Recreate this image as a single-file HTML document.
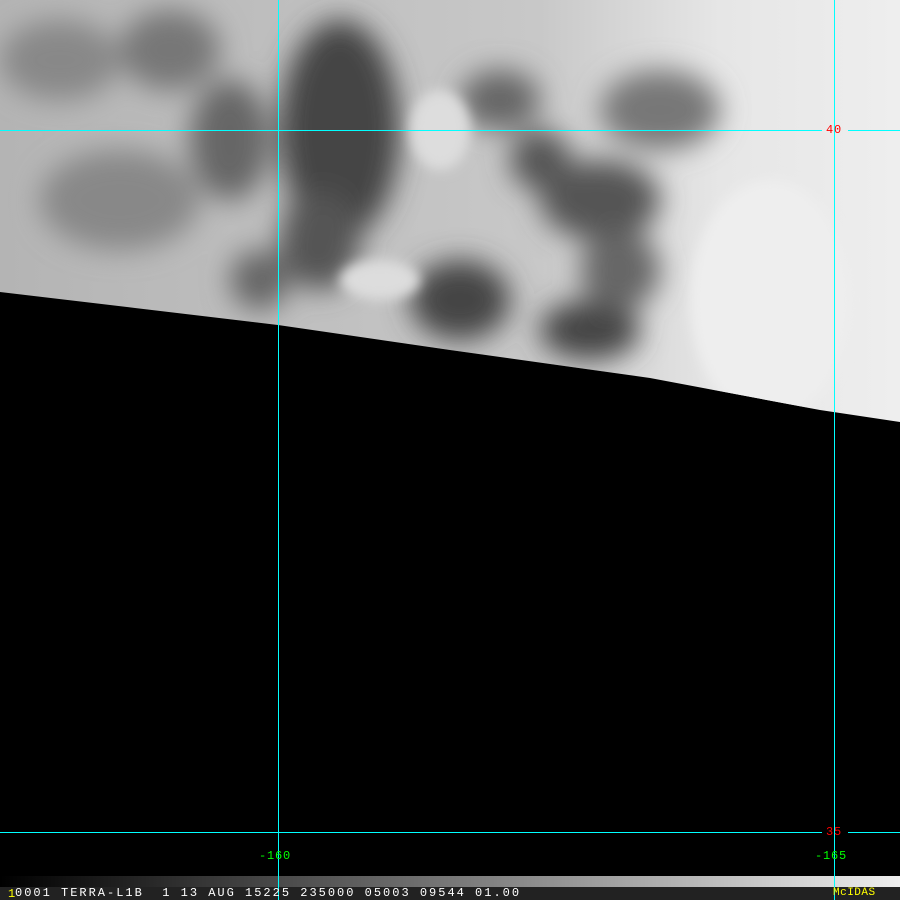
<!DOCTYPE html>
<html><head><style>
html,body{margin:0;padding:0;background:#000;width:900px;height:900px;overflow:hidden;position:relative;font-family:"Liberation Mono",monospace}
svg{position:absolute;left:0;top:0}
.t{position:absolute;font-size:12px;line-height:12px;white-space:pre;letter-spacing:0.8px}
</style></head><body>
<svg width="900" height="900" viewBox="0 0 900 900">
<defs>
<clipPath id="c"><polygon points="0,0 900,0 900,422 820,410 650,378 450,350 278,325 135,308 0,292"/></clipPath>
<filter id="b" x="-50%" y="-50%" width="200%" height="200%"><feGaussianBlur stdDeviation="14"/></filter>
<filter id="b2" x="-50%" y="-50%" width="200%" height="200%"><feGaussianBlur stdDeviation="6"/></filter>
<linearGradient id="g" x1="0" x2="1">
<stop offset="0" stop-color="#b4b4b4"/><stop offset="0.6" stop-color="#c8c8c8"/><stop offset="0.8" stop-color="#e6e6e6"/><stop offset="1" stop-color="#eeeeee"/></linearGradient>
<linearGradient id="bar" x1="0" x2="1">
<stop offset="0" stop-color="#000"/><stop offset="1" stop-color="#eee"/></linearGradient>
</defs>
<g clip-path="url(#c)">
<rect width="900" height="430" fill="url(#g)"/>
<g filter="url(#b)" fill="#444">
<ellipse cx="340" cy="130" rx="60" ry="110"/>
<ellipse cx="320" cy="240" rx="40" ry="50" fill="#555"/>
<ellipse cx="460" cy="300" rx="50" ry="40"/>
<ellipse cx="590" cy="330" rx="50" ry="30"/>
<ellipse cx="600" cy="200" rx="60" ry="40" fill="#555"/>
<ellipse cx="500" cy="100" rx="40" ry="30" fill="#666"/>
<ellipse cx="660" cy="110" rx="60" ry="40" fill="#777"/>
<ellipse cx="230" cy="140" rx="40" ry="60" fill="#666"/>
<ellipse cx="120" cy="200" rx="80" ry="50" fill="#888"/>
<ellipse cx="60" cy="60" rx="60" ry="40" fill="#888"/>
<ellipse cx="170" cy="50" rx="50" ry="40" fill="#777"/>
<ellipse cx="260" cy="280" rx="30" ry="30" fill="#666"/>
<ellipse cx="620" cy="270" rx="40" ry="40" fill="#666"/>
<ellipse cx="540" cy="160" rx="30" ry="30" fill="#555"/>
</g>
<g filter="url(#b2)" fill="#eee">
<ellipse cx="770" cy="300" rx="80" ry="120"/>
<ellipse cx="380" cy="280" rx="40" ry="20" fill="#ddd"/>
<ellipse cx="440" cy="130" rx="30" ry="40" fill="#ddd"/>
</g>
</g>
<rect x="0" y="876" width="900" height="11" fill="url(#bar)"/>
<rect x="0" y="887" width="900" height="13" fill="#222"/>
<rect x="0" y="130" width="822" height="1" fill="#0ff"/>
<rect x="848" y="130" width="52" height="1" fill="#0ff"/>
<rect x="0" y="832" width="822" height="1" fill="#0ff"/>
<rect x="848" y="832" width="52" height="1" fill="#0ff"/>
<rect x="278" y="0" width="1" height="900" fill="#0ff"/>
<rect x="834" y="0" width="1" height="900" fill="#0ff"/>
</svg>
<div class="t" style="left:826px;top:124px;color:#f00">40</div>
<div class="t" style="left:826px;top:826px;color:#f00">35</div>
<div class="t" style="left:259px;top:850px;color:#0f0">-160</div>
<div class="t" style="left:815px;top:850px;color:#0f0">-165</div>
<div class="t" style="left:8px;top:888px;color:#ff0">1</div>
<div class="t" style="left:15px;top:887px;color:#fff;letter-spacing:2px">0001 TERRA-L1B  1 13 AUG 15225 235000 05003 09544 01.00</div>
<div class="t" style="left:833px;top:887px;color:#ff0;font-size:11px;letter-spacing:0.5px">McIDAS</div>
</body></html>
